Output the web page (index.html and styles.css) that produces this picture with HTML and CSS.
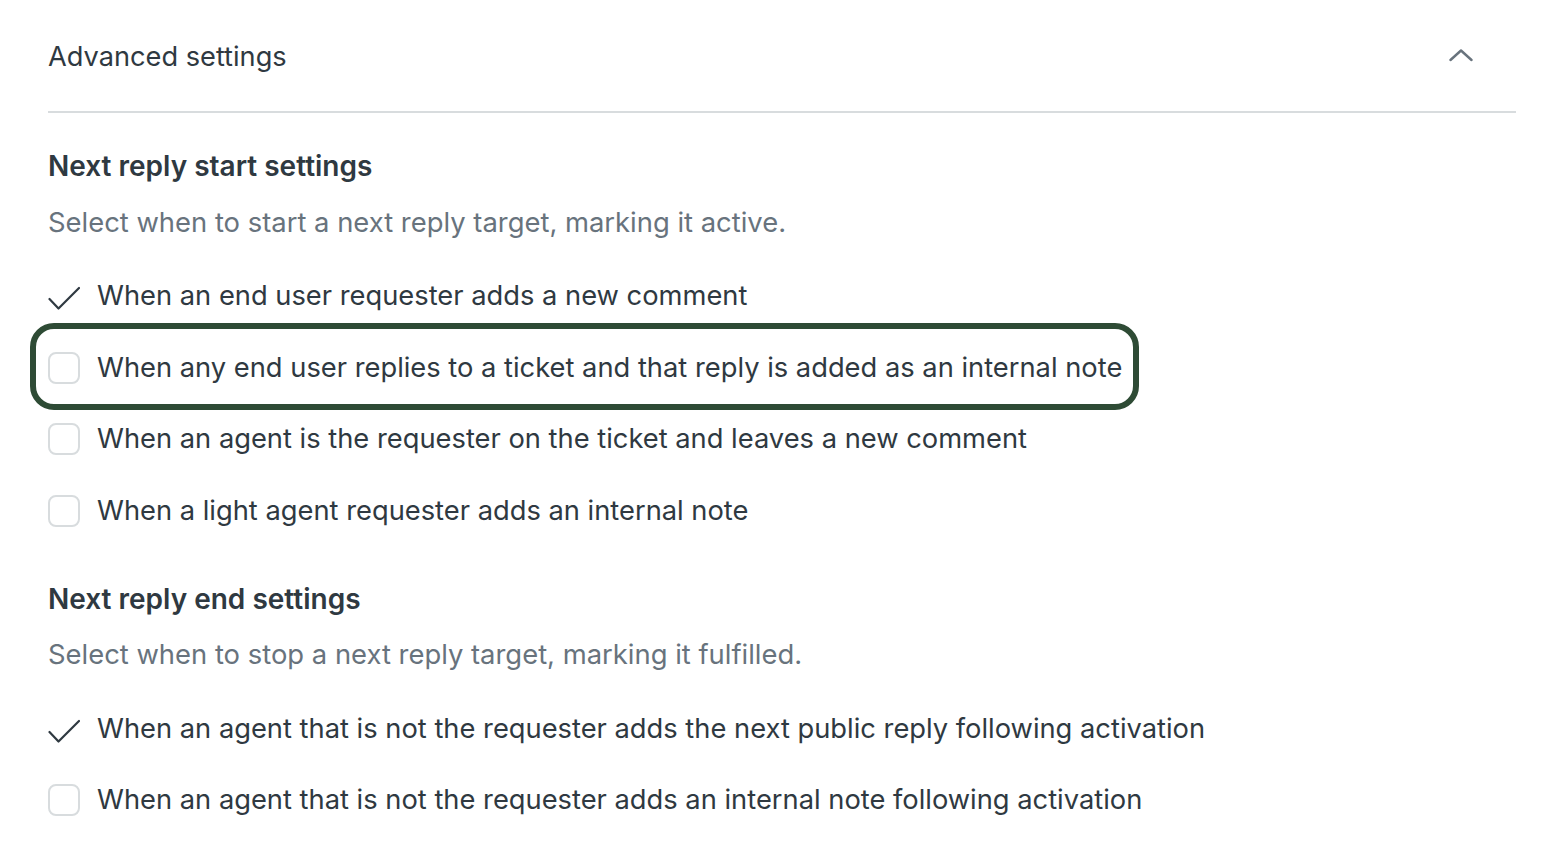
FILE: index.html
```html
<!DOCTYPE html>
<html lang="en">
<head>
<meta charset="utf-8">
<title>Advanced settings</title>
<link rel="stylesheet" href="styles.css">
</head>
<body>
<div class="page">
  <div class="panel-header">
    <span class="panel-title">Advanced settings</span>
    <svg class="chevron" width="24" height="14" viewBox="0 0 24 14" aria-hidden="true"><path d="M1.5 12 L12 2.5 L22.5 12" fill="none" stroke="#68737d" stroke-width="2.4" stroke-linecap="round" stroke-linejoin="round"/></svg>
  </div>

  <section class="group first">
    <h2 class="group-title">Next reply start settings</h2>
    <p class="group-hint">Select when to start a next reply target, marking it active.</p>
    <ul class="options">
      <li class="option">
        <span class="mark checked"><svg width="32" height="32" viewBox="0 0 32 32"><path d="M1.5 19 L10.5 28.5 L31 8" fill="none" stroke="#2f3941" stroke-width="2.2" stroke-linecap="round" stroke-linejoin="round"/></svg></span>
        <span class="label">When an end user requester adds a new comment</span>
      </li>
      <li class="option highlighted">
        <span class="mark box"></span>
        <span class="label">When any end user replies to a ticket and that reply is added as an internal note</span>
      </li>
      <li class="option">
        <span class="mark box"></span>
        <span class="label">When an agent is the requester on the ticket and leaves a new comment</span>
      </li>
      <li class="option">
        <span class="mark box"></span>
        <span class="label">When a light agent requester adds an internal note</span>
      </li>
    </ul>
  </section>

  <section class="group second">
    <h2 class="group-title">Next reply end settings</h2>
    <p class="group-hint">Select when to stop a next reply target, marking it fulfilled.</p>
    <ul class="options">
      <li class="option">
        <span class="mark checked"><svg width="32" height="32" viewBox="0 0 32 32"><path d="M1.5 19 L10.5 28.5 L31 8" fill="none" stroke="#2f3941" stroke-width="2.2" stroke-linecap="round" stroke-linejoin="round"/></svg></span>
        <span class="label">When an agent that is not the requester adds the next public reply following activation</span>
      </li>
      <li class="option">
        <span class="mark box"></span>
        <span class="label">When an agent that is not the requester adds an internal note following activation</span>
      </li>
    </ul>
  </section>
</div>
</body>
</html>
```

FILE: styles.css
```css
html, body {
  margin: 0;
  padding: 0;
  background: #ffffff;
}

body {
  font-family: Inter, "Noto Sans", "Liberation Sans", sans-serif;
  color: #2f3941;
}

.page {
  padding: 0 28px 0 48px;
}

.panel-header {
  display: flex;
  align-items: center;
  justify-content: space-between;
  height: 111px;
  border-bottom: 2px solid #d8dcde;
  padding-right: 43px;
}

.panel-title {
  font-size: 27.2px;
  font-weight: 400;
  line-height: 40px;
  margin-top: 2px;
}

.chevron {
  display: block;
  margin-top: -1px;
}

.group-title {
  margin: 0;
  font-size: 28px;
  font-weight: 600;
  line-height: 40px;
}

.group.first {
  padding-top: 33px;
}

.group.second {
  padding-top: 32px;
}

.group-hint {
  margin: 16px 0 0;
  font-size: 27.4px;
  line-height: 40px;
  color: #68737d;
}

.options {
  list-style: none;
  margin: 18px 0 0;
  padding: 0;
}

.second .group-hint {
  margin-top: 15px;
}

.second .options {
  margin-top: 19px;
}

.option {
  display: flex;
  align-items: center;
  gap: 17px;
  height: 71.7px;
  font-size: 27.3px;
  width: fit-content;
}

.mark {
  flex: none;
  width: 32px;
  height: 32px;
  box-sizing: border-box;
}

.mark svg {
  display: block;
}

.mark.box {
  border: 2px solid #d8dcde;
  border-radius: 8px;
  background: #ffffff;
}

.label {
  line-height: 40px;
  white-space: nowrap;
}

.highlighted {
  position: relative;
}

.highlighted::after {
  content: "";
  position: absolute;
  top: -9px;
  bottom: -7px;
  left: -18px;
  right: -17px;
  border: 6px solid #2e4b35;
  border-radius: 24px;
  pointer-events: none;
}
```
